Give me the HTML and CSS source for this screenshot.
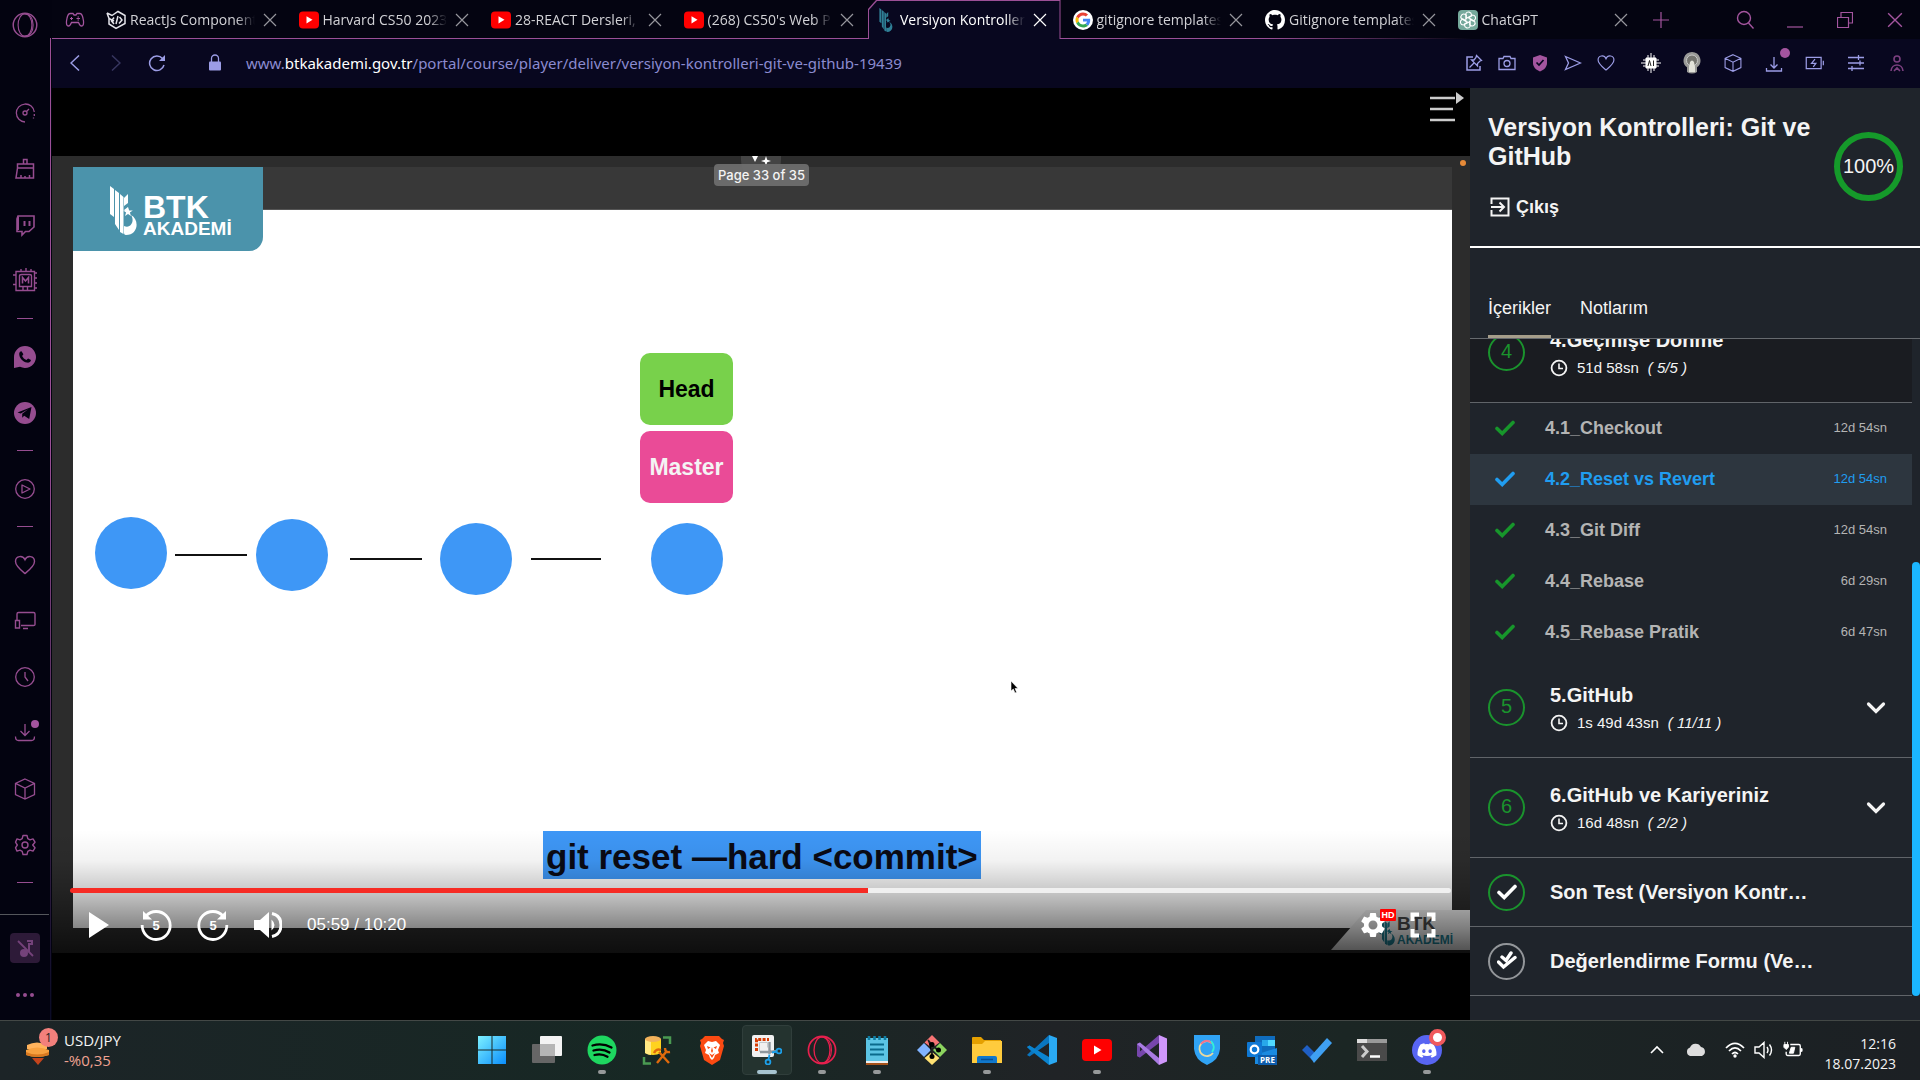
FILE: index.html
```html
<!DOCTYPE html>
<html lang="tr">
<head>
<meta charset="utf-8">
<title>Versiyon Kontrolleri: Git ve GitHub</title>
<link rel="stylesheet" href="styles.css">
</head>
<body>
<svg class="defs" aria-hidden="true">
  <defs>
    <symbol id="close" viewBox="0 0 14 14"><path d="M1 1l12 12M13 1L1 13" fill="none" stroke="currentColor" stroke-width="1.2"/></symbol>
    <symbol id="youtube" viewBox="0 0 20 18"><rect width="20" height="17" y=".5" rx="4" fill="#f00"/><path d="M7.5 5.2v7.2l6-3.6z" fill="#fff"/></symbol>
    <symbol id="check" viewBox="0 0 20 16"><path d="M2 8.500l5.200 5L18 2.500" fill="none" stroke="currentColor" stroke-width="3.600" stroke-linecap="round" stroke-linejoin="miter"/></symbol>
    <symbol id="clock" viewBox="0 0 18 18"><circle cx="9" cy="9" r="7.400" fill="none" stroke="currentColor" stroke-width="1.800"/><path d="M9 4.500V9.500h4" fill="none" stroke="currentColor" stroke-width="1.600"/></symbol>
    <symbol id="chevron" viewBox="0 0 20 14"><path d="M2.500 3l7.500 7.500L17.500 3" fill="none" stroke="currentColor" stroke-width="3.200" stroke-linecap="round"/></symbol>
    <symbol id="cube" viewBox="0 0 24 24"><path d="M12 2l9.500 4.300v11.200L12 22l-9.500-4.500V6.300zM2.500 6.300L12 11l9.500-4.700M12 11v11" fill="none" stroke="currentColor" stroke-width="1.300"/></symbol>
    <symbol id="heart" viewBox="0 0 24 24"><path d="M12 20.500C8 17.200 2.500 13 2.500 8.500c0-6 7.500-6.500 9.500-1.700 2-4.800 9.500-4.300 9.500 1.700 0 4.500-5.500 8.700-9.500 12z" fill="none" stroke="currentColor" stroke-width="1.400"/></symbol>
    <symbol id="opera" viewBox="0 0 32 32"><g fill="none" stroke="currentColor"><circle cx="16" cy="16" r="14.500" stroke-width="1.800"/><ellipse cx="16" cy="16" rx="8.500" ry="14" stroke-width="1.400"/><path d="M14 2c9 0 12 7 12 14s-3 14-12 14" stroke-width="1.400"/></g></symbol>
    <symbol id="btk" viewBox="0 0 27 49"><path d="M0 0l4 3v28l-4-3zM5 4l4 3v37l-4-6zM10 8l3.500 3v37l-3.500-2zM14 12l4-4v9l-4 3zM14 24l4-3v6z" fill="currentColor"/><path d="M18 21l1.200 3.400h3.600l-2.900 2.100 1.100 3.500-3-2.100-3 2.100 1.100-3.500-2.900-2.100h3.600z" fill="currentColor"/><path d="M21 29c9 5 7 20-5 20-3 0-2-5-2-9 7 3 11-5 7-11z" fill="currentColor"/></symbol>
    <symbol id="check2" viewBox="0 0 20 20"><path d="M1.500 11l5 5L18 6.500M5 6l4 3.500L14 2" fill="none" stroke="currentColor" stroke-width="3.400" stroke-linecap="round"/></symbol>
  </defs>
</svg>

<div class="browser">
  <nav class="rail" aria-label="Kenar çubuğu">
    <button class="rail-logo" aria-label="Opera"><svg width="26" height="26"><use href="#opera"/></svg></button>
    <button class="rail-btn" aria-label="GX Control"><svg width="24" height="24" viewBox="0 0 24 24"><g fill="none" stroke="currentColor" stroke-width="1.300"><path d="M12 21a9 9 0 1 1 9.300-10M21.300 13v2M20.500 16.500v1M13.500 10.500L16 8"/><circle cx="12" cy="12" r="2"/></g></svg></button>
    <button class="rail-btn" aria-label="GX Cleaner"><svg width="24" height="24" viewBox="0 0 24 24"><path d="M10.500 7V2.500h3.500V7M4.500 7h16v4h-16zM4.500 11L3 21h17.500V11M8 21v-3M12 21v-2M16.500 21v-3" fill="none" stroke="currentColor" stroke-width="1.500"/></svg></button>
    <button class="rail-btn" aria-label="Twitch"><svg width="24" height="24" viewBox="0 0 24 24"><path d="M5 3h16v11l-5 4.500h-3.500L9 22v-3.500H4V6z" fill="none" stroke="currentColor" stroke-width="1.600"/><path d="M4 5l2-2v14H4zM10.500 8h2v5h-2zM15.500 8h2v5h-2z" fill="currentColor"/></svg></button>
    <button class="rail-btn" aria-label="Mod"><svg width="26" height="26" viewBox="0 0 26 26"><path d="M4 3.500h18.500v19H4zM7.500 8q0-1.500 2-1.500h8q2 0 2 1.500v10.500H7.500zM9 3.500V1M14 3.500V0M19 3.500V1M22.500 5H25M22.500 10H25M22.500 15H25M22.500 20H25M4 7H1M4 16.500H1M11 18.500v4M15.500 18.500v4" fill="none" stroke="currentColor" stroke-width="1.400"/><path d="M10.500 15.500V9.500l3 3.500 3-3.500v6" fill="none" stroke="currentColor" stroke-width="1.600"/></svg></button>
    <hr class="rail-dash">
    <button class="rail-btn" aria-label="WhatsApp"><svg width="24" height="24" viewBox="0 0 24 24"><path d="M12 1a11 11 0 1 1-5 20.800L1 23V12A11 11 0 0 1 12 1z" fill="currentColor"/><path d="M8.500 6.200l1.900 3-1.300 1.700c1 2 2.300 3.200 4.300 4l1.700-1.500 2.900 1.600c-.4 2.300-2.200 2.900-4 2.600C9.500 16.700 6.400 13 6.200 9c0-1.500 1-2.800 2.300-2.800z" fill="#030311"/></svg></button>
    <button class="rail-btn" aria-label="Telegram"><svg width="24" height="24" viewBox="0 0 24 24"><circle cx="12" cy="12" r="11" fill="currentColor"/><path d="M4.500 11.500L18.500 6l-2.300 12-5-3.300-2 2v-4l6-4.500-7.500 4.300z" fill="#030311"/></svg></button>
    <hr class="rail-dash">
    <button class="rail-btn" aria-label="Oynatıcı"><svg width="24" height="24" viewBox="0 0 24 24"><g fill="none" stroke="currentColor" stroke-width="1.300"><circle cx="12" cy="12" r="9.300"/><path d="M9 8v8l8-4z" stroke-linejoin="round"/></g></svg></button>
    <hr class="rail-dash">
    <button class="rail-btn" aria-label="Favoriler"><svg width="24" height="24"><use href="#heart"/></svg></button>
    <button class="rail-btn" aria-label="Cihazlar"><svg width="24" height="24" viewBox="0 0 24 24"><path d="M4 11V5q0-1.500 1.500-1.500h15Q22 3.500 22 5v10.500q0 1-1.500 1H8M2.500 11.500h4v7.500h-4zM10 19.500h5" fill="none" stroke="currentColor" stroke-width="1.400"/></svg></button>
    <button class="rail-btn" aria-label="Geçmiş"><svg width="24" height="24" viewBox="0 0 24 24"><g fill="none" stroke="currentColor" stroke-width="1.300"><circle cx="12" cy="12" r="9.300"/><path d="M12 7v5l3 4"/></g></svg></button>
    <button class="rail-btn has-dot" aria-label="İndirilenler"><svg width="24" height="24" viewBox="0 0 24 24"><path d="M12 3v11M7.500 10l4.500 4.500 4.500-4.500M2.500 15.500q0 4 3 4h13q3 0 3-4" fill="none" stroke="currentColor" stroke-width="1.300"/></svg></button>
    <button class="rail-btn" aria-label="Uzantılar"><svg width="24" height="24"><use href="#cube"/></svg></button>
    <button class="rail-btn" aria-label="Ayarlar"><svg width="24" height="24" viewBox="0 0 24 24"><g fill="none" stroke="currentColor" stroke-width="1.400" stroke-linejoin="round"><circle cx="12" cy="12" r="3"/><path d="M10 2.500h4l.8 3.200 2.200 1.200 3-1 2 3.300-2.300 2.800 2.300 2.800-2 3.300-3-1-2.200 1.200-.8 3.200h-4l-.8-3.200L7 17.100l-3 1-1.500-3.300L4.300 12 2.500 9.200 4 5.900l3 1 2.200-1.200z"/></g></svg></button>
    <hr class="rail-dash">
    <div class="rail-foot">
      <button class="rail-mute" aria-label="Müziği kapat"><svg width="20" height="20" viewBox="0 0 20 20"><path d="M12 3h5v3h-3v8" fill="none" stroke="currentColor" stroke-width="2"/><circle cx="9" cy="15" r="4" fill="currentColor"/><path d="M3 3l15 15" stroke="currentColor" stroke-width="1.800"/></svg></button>
      <button class="rail-more" aria-label="Daha fazla"><svg width="20" height="6" viewBox="0 0 20 6"><g fill="currentColor"><circle cx="3" cy="3" r="2"/><circle cx="10" cy="3" r="2"/><circle cx="17" cy="3" r="2"/></g></svg></button>
    </div>
  </nav>

  <div class="window">
    <header class="tabstrip">
      <button class="gx" aria-label="GX Corner"><svg width="20" height="16" viewBox="0 0 20 16"><path d="M5 1.500h3l1 1.500h2l1-1.500h3q2.500 0 3.500 7.500.5 5-2 5-1.500 0-3-3.500h-7Q5 14 3.500 14 1 14 1.500 9 2.500 1.500 5 1.500z" fill="none" stroke="currentColor" stroke-width="1.300"/><path d="M5 6.500h3M6.500 5v3M12.500 5h1.500M12.500 8h1.500M11.500 6.500h3.500" stroke="currentColor"/></svg></button>
      <div class="tabs">
        <div class="tab"><svg width="20" height="20" viewBox="0 0 20 20"><g fill="none" stroke="#e4e4ea" stroke-width="1.500"><path d="M1 3l5 2.500L12 1.500l7 4v8l-9 5-7-4.500V8.500L1 3"/><path d="M3 8.500l5 2.500M8 7.500L5.500 11 8 14M12 6l-2 8M13.500 7l2.500 3-3 3.500"/></g></svg><a href="#">ReactJs Component</a><button aria-label="Kapat"><svg width="14" height="14"><use href="#close"/></svg></button></div>
        <div class="tab"><svg width="20" height="18"><use href="#youtube"/></svg><a href="#">Harvard CS50 2023 Web</a><button aria-label="Kapat"><svg width="14" height="14"><use href="#close"/></svg></button></div>
        <div class="tab"><svg width="20" height="18"><use href="#youtube"/></svg><a href="#">28-REACT Dersleri, 2</a><button aria-label="Kapat"><svg width="14" height="14"><use href="#close"/></svg></button></div>
        <div class="tab"><svg width="20" height="18"><use href="#youtube"/></svg><a href="#">(268) CS50's Web Prog</a><button aria-label="Kapat"><svg width="14" height="14"><use href="#close"/></svg></button></div>
        <div class="tab active"><svg class="mark" width="20" height="24"><use href="#btk"/></svg><a href="#">Versiyon Kontrolleri: Git</a><button aria-label="Kapat"><svg width="14" height="14"><use href="#close"/></svg></button></div>
        <div class="tab"><svg width="20" height="20" viewBox="0 0 64 64"><circle cx="32" cy="32" r="32" fill="#fff"/><g transform="translate(8 8)"><path fill="#EA4335" d="M24 9.500c3.540 0 6.710 1.220 9.210 3.600l6.850-6.850C35.900 2.380 30.470 0 24 0 14.620 0 6.510 5.380 2.560 13.220l7.980 6.190C12.430 13.720 17.740 9.500 24 9.500z"/><path fill="#4285F4" d="M46.980 24.550c0-1.570-.15-3.090-.38-4.550H24v9.020h12.940c-.58 2.960-2.260 5.480-4.780 7.180l7.730 6c4.510-4.180 7.090-10.360 7.090-17.650z"/><path fill="#FBBC05" d="M10.530 28.590c-.48-1.450-.76-2.990-.76-4.590s.27-3.140.76-4.590l-7.980-6.190C.92 16.460 0 20.120 0 24c0 3.880.92 7.540 2.560 10.780l7.970-6.190z"/><path fill="#34A853" d="M24 48c6.480 0 11.930-2.130 15.890-5.810l-7.730-6c-2.150 1.450-4.920 2.300-8.160 2.300-6.260 0-11.570-4.220-13.470-9.910l-7.980 6.190C6.510 42.620 14.620 48 24 48z"/></g></svg><a href="#">gitignore templates</a><button aria-label="Kapat"><svg width="14" height="14"><use href="#close"/></svg></button></div>
        <div class="tab"><svg width="20" height="20" viewBox="0 0 16 16"><path fill="#fff" d="M8 0C3.580 0 0 3.580 0 8c0 3.540 2.290 6.530 5.470 7.590.4.070.55-.17.55-.38 0-.19-.01-.82-.01-1.490-2.010.37-2.530-.49-2.690-.94-.09-.23-.48-.94-.82-1.130-.28-.15-.68-.52-.01-.53.63-.01 1.080.58 1.230.82.72 1.210 1.870.87 2.330.66.07-.52.28-.87.51-1.070-1.780-.2-3.640-.89-3.640-3.950 0-.87.31-1.590.82-2.150-.08-.2-.36-1.020.08-2.120 0 0 .67-.21 2.200.82.64-.18 1.320-.27 2-.27s1.360.09 2 .27c1.530-1.040 2.200-.82 2.200-.82.44 1.100.16 1.920.08 2.120.51.56.82 1.270.82 2.150 0 3.070-1.870 3.750-3.650 3.950.29.25.54.73.54 1.480 0 1.070-.01 1.930-.01 2.200 0 .21.15.46.55.38A8.010 8.010 0 0 0 16 8c0-4.420-3.580-8-8-8z"/></svg><a href="#">Gitignore templates</a><button aria-label="Kapat"><svg width="14" height="14"><use href="#close"/></svg></button></div>
        <div class="tab"><svg width="20" height="20" viewBox="0 0 20 20"><rect width="20" height="20" rx="4" fill="#75a99b"/><g fill="none" stroke="#fff" stroke-width="1.100"><path id="petal" d="M10 8.200L13.500 6V5a3 3 0 0 0-5.600-1.500L7.800 10"/><use href="#petal" transform="rotate(60 10 10)"/><use href="#petal" transform="rotate(120 10 10)"/><use href="#petal" transform="rotate(180 10 10)"/><use href="#petal" transform="rotate(240 10 10)"/><use href="#petal" transform="rotate(300 10 10)"/></g></svg><a href="#">ChatGPT</a><button aria-label="Kapat"><svg width="14" height="14"><use href="#close"/></svg></button></div>
      </div>
      <button class="new-tab" aria-label="Yeni sekme"><svg width="16" height="16" viewBox="0 0 16 16"><path d="M8 0v16M0 8h16" stroke="currentColor" stroke-width="1.200"/></svg></button>
      <div class="win-buttons">
        <button aria-label="Ara"><svg width="20" height="20" viewBox="0 0 20 20"><g fill="none" stroke="currentColor" stroke-width="1.400"><circle cx="9" cy="8" r="6.500"/><path d="M13.500 13l5 5.500"/></g></svg></button>
        <button aria-label="Küçült"><svg width="16" height="16" viewBox="0 0 16 16"><path d="M0 15h16" stroke="currentColor" stroke-width="1.200"/></svg></button>
        <button aria-label="Geri yükle"><svg width="16" height="16" viewBox="0 0 16 16"><path d="M.5 5.500h11v10H.5zM4 5V.5h11.500V11H12" fill="none" stroke="currentColor" stroke-width="1.200"/></svg></button>
        <button aria-label="Pencereyi kapat"><svg width="16" height="16" viewBox="0 0 14 14"><use href="#close"/></svg></button>
      </div>
    </header>

    <div class="toolbar">
      <div class="nav">
        <button aria-label="Geri"><svg width="10" height="16" viewBox="0 0 10 16"><path d="M9 .5L1 8l8 7.500" fill="none" stroke="currentColor" stroke-width="1.500"/></svg></button>
        <button aria-label="İleri" disabled><svg width="10" height="16" viewBox="0 0 10 16"><path d="M1 .5L9 8l-8 7.500" fill="none" stroke="currentColor" stroke-width="1.500"/></svg></button>
        <button aria-label="Yenile"><svg width="18" height="18" viewBox="0 0 18 18"><path d="M16 11A7.300 7.300 0 1 1 14.500 4.500" fill="none" stroke="currentColor" stroke-width="1.500"/><path d="M17 1v6h-6z" fill="currentColor"/></svg></button>
      </div>
      <svg class="lock" width="12" height="17" viewBox="0 0 12 17"><path d="M2.500 8V4.500a3.500 3.500 0 0 1 7 0V8" fill="none" stroke="currentColor" stroke-width="1.300"/><rect y="7.500" width="12" height="9" rx="1" fill="currentColor"/></svg>
      <p class="url">www.<b>btkakademi.gov.tr</b>/portal/course/player/deliver/versiyon-kontrolleri-git-ve-github-19439</p>
      <div class="page-actions">
        <button aria-label="Sabitle"><svg width="18" height="18" viewBox="0 0 18 18"><path d="M8 3H2v13h13v-4" fill="none" stroke="currentColor" stroke-width="1.500"/><path d="M11.500 1.500l5 5-1.500.5-2.500 2.500V12L6.500 6h2.500L11 3.500zM9 9l-4.500 4.500" fill="none" stroke="currentColor" stroke-width="1.300"/></svg></button>
        <button aria-label="Anlık görüntü"><svg width="18" height="18" viewBox="0 0 18 18"><path d="M1 4.500h4l1-2h6l1 2h4v11H1z" fill="none" stroke="currentColor" stroke-width="1.300"/><circle cx="9" cy="9.500" r="3" fill="none" stroke="currentColor" stroke-width="1.300"/></svg></button>
        <button class="pink" aria-label="Reklam engelleyici"><svg width="16" height="18" viewBox="0 0 16 18"><path d="M8 1l7 2.500V9c0 4-3 7-7 8.500C4 16 1 13 1 9V3.500z" fill="currentColor"/><path d="M4.500 8.500l2.500 2.500 4.500-5" fill="none" stroke="#08071f" stroke-width="1.700"/></svg></button>
        <button aria-label="Akışa gönder"><svg width="18" height="16" viewBox="0 0 18 16"><path d="M1.500 1.500L16.500 8l-15 6.500L4.500 8z" fill="none" stroke="currentColor" stroke-width="1.300"/></svg></button>
        <button aria-label="Favorilere ekle"><svg width="20" height="20"><use href="#heart"/></svg></button>
      </div>
      <div class="extensions">
        <button aria-label="AI"><svg width="20" height="20" viewBox="0 0 20 20"><path d="M5 5h10v10H5zM7 2v16M10 0v20M13 2v16M2 7h16M0 10h20M2 13h16" fill="#fff" stroke="#fff"/><path d="M7 13l1.500-5.500L10 13M12.500 7.500V13" fill="none" stroke="#222"/></svg></button>
        <button aria-label="Işık"><svg width="18" height="22" viewBox="0 0 18 22"><path d="M9 0a8.500 8.500 0 0 1 5 15.300V20q-5 3-10 0v-4.700A8.500 8.500 0 0 1 9 0z" fill="#9a9a98"/><circle cx="9" cy="8.500" r="5.500" fill="#74746f" stroke="#c8c8c8"/><path d="M7 10q2-3 4 0l1 5v5H6v-5z" fill="#e2e2da"/></svg></button>
        <button aria-label="Uzantılar"><svg width="20" height="20"><use href="#cube"/></svg></button>
        <button class="has-dot" aria-label="İndirilenler"><svg width="18" height="18" viewBox="0 0 18 18"><path d="M9 3v11M5.500 10.500L9 14l3.500-3.500M1.500 14v3h15v-3" fill="none" stroke="currentColor" stroke-width="1.300"/></svg></button>
        <button aria-label="Pil"><svg width="20" height="14" viewBox="0 0 22 16"><path d="M1 1.500h17v13H1zM20.500 5.500v5M11 3.500L7 8.500h5l-3 4" fill="none" stroke="currentColor" stroke-width="1.400"/></svg></button>
        <button aria-label="Kolay kurulum"><svg width="18" height="18" viewBox="0 0 18 18"><path d="M1 3.500h16M1 9h16M1 14.500h16M11.500 1v5M13 6.500v5M5 12v5" stroke="currentColor" stroke-width="1.300"/></svg></button>
        <button class="profile" aria-label="Profil"><svg width="16" height="18" viewBox="0 0 16 18"><g fill="none" stroke="currentColor" stroke-width="1.600"><circle cx="8" cy="5" r="3"/><path d="M2 17c.5-8 11.500-8 12 0M5 17l3-3 3 3"/></g></svg></button>
      </div>
    </div>

    <main class="page">
      <section class="player" aria-label="Video oynatıcı">
        <div class="player-top">
          <button class="menu-toggle" aria-label="Menüyü gizle"><svg width="36" height="26" viewBox="0 0 36 26"><path d="M1 4h25M1 15h23M1 26h25" stroke="#ccc" stroke-width="2.500"/><path d="M27-2v12l8-6z" fill="#ccc"/></svg></button>
        </div>
        <div class="frame">
          <span class="rec-dot"></span>
          <span class="sparkle"><svg width="40" height="24" viewBox="0 0 40 24"><path d="M11 0h6l-3 6zM25 0l1.200 3.800L30 5l-3.800 1.200L25 10l-1.200-3.800L20 5l3.800-1.200z" fill="#fff"/></svg></span>
          <span class="page-pill">Page 33 of 35</span>
          <div class="brand"><svg width="27" height="49"><use href="#btk"/></svg><p><b>BTK</b><span>AKADEMİ</span></p></div>
          <div class="pdf-bar"></div>
          <div class="slide">
            <span class="commit c1"></span><span class="edge e1"></span>
            <span class="commit c2"></span><span class="edge e2"></span>
            <span class="commit c3"></span><span class="edge e3"></span>
            <span class="commit c4"></span>
            <span class="ref head">Head</span>
            <span class="ref master">Master</span>
            <span class="command">git reset —hard &lt;commit&gt;</span>
            <svg class="cursor" width="9" height="14" viewBox="0 0 9 14"><path d="M1 1v10l2.300-2 1.700 4 1.600-.8L5 8.500h3z" fill="#000" stroke="#fff" stroke-width=".6"/></svg>
          </div>
          <div class="watermark"><svg width="16" height="32"><use href="#btk"/></svg><p><b>BTK</b><span>AKADEMİ</span></p></div>
          <div class="controls">
            <input class="seek" type="range" min="0" max="620" value="359" aria-label="Konum" style="--played:57.8%">
            <div class="control-row">
              <button aria-label="Oynat"><svg width="20" height="26" viewBox="0 0 20 26"><path d="M0 0v26l20-13z" fill="currentColor"/></svg></button>
              <button aria-label="5 saniye geri"><svg width="32" height="32" viewBox="0 0 32 32"><path d="M2.200 16A14 14 0 1 0 16 2.500Q10 2.500 6 7" fill="none" stroke="currentColor" stroke-width="2.800"/><path d="M3 2v8.500h9z" fill="currentColor"/><text x="16" y="21">5</text></svg></button>
              <button aria-label="5 saniye ileri"><svg width="32" height="32" viewBox="0 0 32 32"><path d="M29.800 16A14 14 0 1 1 16 2.500Q22 2.500 26 7" fill="none" stroke="currentColor" stroke-width="2.800"/><path d="M29 2v8.500h-9z" fill="currentColor"/><text x="16" y="21">5</text></svg></button>
              <button class="volume" aria-label="Ses"><svg width="28" height="28" viewBox="0 0 28 28"><path d="M0 9h6l9-8v26l-9-8H0zM17.500 8.500q6 5.500 0 11z" fill="currentColor"/><path d="M18 2.500q9 2 9 11.500t-9 11.500" fill="none" stroke="currentColor" stroke-width="3"/></svg></button>
              <span class="time">05:59 / 10:20</span>
              <button class="settings" aria-label="Ayarlar"><svg width="30" height="30" viewBox="0 0 24 24"><path fill="currentColor" d="M19.140 12.940c.04-.3.06-.61.06-.94 0-.32-.02-.64-.07-.94l2.030-1.580c.18-.14.23-.41.12-.61l-1.920-3.320c-.12-.22-.37-.29-.59-.22l-2.390.96c-.5-.38-1.030-.7-1.620-.94l-.36-2.540c-.04-.24-.24-.41-.48-.41h-3.840c-.24 0-.43.17-.47.41l-.36 2.540c-.59.24-1.130.57-1.620.94l-2.390-.96c-.22-.08-.47 0-.59.22L2.740 8.870c-.12.21-.08.47.12.61l2.030 1.580c-.05.3-.09.63-.09.94s.02.64.07.94l-2.030 1.580c-.18.14-.23.41-.12.61l1.920 3.320c.12.22.37.29.59.22l2.390-.96c.5.38 1.030.7 1.620.94l.36 2.540c.05.24.24.41.48.41h3.840c.24 0 .44-.17.47-.41l.36-2.540c.59-.24 1.130-.56 1.620-.94l2.390.96c.22.08.47 0 .59-.22l1.920-3.320c.12-.22.07-.47-.12-.61l-2.010-1.580zM12 15.600c-1.980 0-3.600-1.620-3.600-3.600s1.620-3.600 3.600-3.600 3.600 1.620 3.600 3.600-1.620 3.600-3.600 3.600z"/></svg><span class="hd">HD</span></button>
              <button aria-label="Tam ekran"><svg width="26" height="26" viewBox="0 0 26 26"><path d="M2.500 9V2.500H9M17 2.500h6.500V9M23.500 17v6.500H17M9 23.500H2.500V17" fill="none" stroke="currentColor" stroke-width="4"/></svg></button>
            </div>
          </div>
        </div>
      </section>

      <aside class="course">
        <header class="course-head">
          <div>
            <h1>Versiyon Kontrolleri: Git ve GitHub</h1>
            <a class="exit" href="#"><svg width="20" height="20" viewBox="0 0 20 20"><path d="M1.500 7V1.500h17v17h-17V13" fill="none" stroke="currentColor" stroke-width="2"/><path d="M1 10h12M9.500 5.500L14 10l-4.500 4.500" fill="none" stroke="currentColor" stroke-width="2"/></svg>Çıkış</a>
          </div>
          <span class="progress">100%</span>
        </header>
        <nav class="course-tabs"><a class="current" href="#">İçerikler</a><a href="#">Notlarım</a></nav>
        <div class="list-view">
          <div class="list">
            <button class="section open"><span class="ring">4</span><span class="info"><b>4.Geçmişe Dönme</b><span class="meta"><svg width="18" height="18"><use href="#clock"/></svg>51d 58sn <i>( 5/5 )</i></span></span></button>
            <ul>
              <li><a href="#"><svg width="20" height="16"><use href="#check"/></svg><b>4.1_Checkout</b><span>12d 54sn</span></a></li>
              <li><a class="playing" href="#"><svg width="20" height="16"><use href="#check"/></svg><b>4.2_Reset vs Revert</b><span>12d 54sn</span></a></li>
              <li><a href="#"><svg width="20" height="16"><use href="#check"/></svg><b>4.3_Git Diff</b><span>12d 54sn</span></a></li>
              <li><a href="#"><svg width="20" height="16"><use href="#check"/></svg><b>4.4_Rebase</b><span>6d 29sn</span></a></li>
              <li><a href="#"><svg width="20" height="16"><use href="#check"/></svg><b>4.5_Rebase Pratik</b><span>6d 47sn</span></a></li>
            </ul>
            <button class="section"><span class="ring">5</span><span class="info"><b>5.GitHub</b><span class="meta"><svg width="18" height="18"><use href="#clock"/></svg>1s 49d 43sn <i>( 11/11 )</i></span></span><svg class="chev" width="20" height="14"><use href="#chevron"/></svg></button>
            <button class="section"><span class="ring">6</span><span class="info"><b>6.GitHub ve Kariyeriniz</b><span class="meta"><svg width="18" height="18"><use href="#clock"/></svg>16d 48sn <i>( 2/2 )</i></span></span><svg class="chev" width="20" height="14"><use href="#chevron"/></svg></button>
            <a class="section single" href="#"><span class="ring"><svg width="20" height="16"><use href="#check"/></svg></span><b>Son Test (Versiyon Kontrolleri: Git ve GitHub)</b></a>
            <a class="section single todo" href="#"><span class="ring"><svg width="20" height="20"><use href="#check2"/></svg></span><b>Değerlendirme Formu (Versiyon Kontrolleri)</b></a>
          </div>
          <div class="scroll-track"><span class="scroll-thumb"></span></div>
        </div>
      </aside>
    </main>
  </div>
</div>

<footer class="taskbar">
  <button class="widget">
    <span class="widget-icon"><svg width="28" height="30" viewBox="0 0 28 30"><path d="M3 8q10-5 20 0v4H3z" fill="#ffb35c"/><path d="M2 13q11-5 23 0v5q-12 4-23 0z" fill="#f7a13f"/><path d="M2 15q11 5 23 0v3q-12 4-23 0z" fill="#d9781f"/><path d="M8 21l6 7 6-7z" fill="#c4441c"/></svg><em>1</em></span>
    <span class="widget-text">USD/JPY<span>-%0,35</span></span>
  </button>
  <div class="apps">
    <button aria-label="Başlat"><svg width="30" height="30" viewBox="0 0 30 30"><defs><linearGradient id="win" x1="0" y1="0" x2="1" y2="1"><stop offset="0" stop-color="#7df1ff"/><stop offset="1" stop-color="#0a8dfb"/></linearGradient></defs><path d="M1 1h13.500v13.500H1zM15.500 1H29v13.500H15.500zM1 15.500h13.500V29H1zM15.500 15.500H29V29H15.500z" fill="url(#win)"/></svg></button>
    <button aria-label="Görev görünümü"><svg width="30" height="30" viewBox="0 0 30 30"><rect x="8" y="1" width="22" height="20" rx="1" fill="#f3f3f3"/><rect y="9" width="23" height="19" rx="1" fill="#666"/><rect x="8" y="9" width="15" height="12" fill="#b5b5b5"/></svg></button>
    <button class="on" aria-label="Spotify"><svg width="30" height="30" viewBox="0 0 30 30"><circle cx="15" cy="15" r="14.500" fill="#1ed760"/><path d="M5.500 10.500q10-3 19 2M6.500 15.500q9-2.500 16 2M7.500 20q7-2 13 1.700" fill="none" stroke="#000" stroke-width="2.300" stroke-linecap="round"/></svg></button>
    <button aria-label="SQL"><svg width="30" height="30" viewBox="0 0 30 30"><path d="M3 4v14q8 4 16 0V4z" fill="#ffd21f"/><path d="M3 4v14q3 2 6 2V4z" fill="#ffe883"/><ellipse cx="11" cy="4" rx="8" ry="3" fill="#f2b25b"/><path d="M21 2.500h7V9M2 22v6.500h7" fill="none" stroke="#4a9a52" stroke-width="2.500"/><path d="M15 28l9-11M12 18q2-5 7-3M17 17l10 11M23 13q0 5 5 4" fill="none" stroke="#e06a0c" stroke-width="2.400"/></svg></button>
    <button aria-label="Brave"><svg width="30" height="30" viewBox="0 0 30 30"><path d="M8 1h14l3 3 2 1-1 3 1 3-4 14-8 5-8-5L3 11l1-3-1-3 2-1z" fill="#fb4a12"/><path d="M15 7l4-1 4 4-2 5 1 3-4 2-1 3-2 2-2-2-1-3-4-2 1-3-2-5 4-4z" fill="#fff"/><path d="M10 11l3.500 1.500L11 14zM20 11l-3.500 1.500L19 14zM15 12l1 4-1 2-1-2zM12 18l3 2 3-2-3 5z" fill="#fb4a12"/></svg></button>
    <button class="on focused" aria-label="Ekran Alıntısı"><svg width="30" height="30" viewBox="0 0 30 30"><rect width="22" height="22" rx="2" fill="#f1f1f1"/><path d="M4.500 16V4.500H17" fill="none" stroke="#d83b01" stroke-width="3" stroke-dasharray="3 1.400"/><path d="M7.500 7.500v9h7M7.500 7.500h8v5" fill="none" stroke="#c3c9cc" stroke-width="1"/><path d="M8 17h9l8-1M17.500 7v12" fill="none" stroke="#8f989e" stroke-width="2.400"/><circle cx="27" cy="16" r="2.400" fill="none" stroke="#1d9fe8" stroke-width="1.800"/><circle cx="16" cy="27" r="2.400" fill="none" stroke="#1d9fe8" stroke-width="1.800"/><path d="M16.500 24.500l1-5M20 17.500l5-1" fill="none" stroke="#1d9fe8" stroke-width="1.800"/></svg></button>
    <button class="on red" aria-label="Opera GX"><svg width="30" height="30"><use href="#opera" width="30" height="30"/></svg></button>
    <button class="on" aria-label="Not Defteri"><svg width="30" height="30" viewBox="0 0 30 30"><path d="M4 26h22v4H4z" fill="#a6521a"/><path d="M4 3h22v23H4z" fill="#5cc4e4"/><path d="M4 26h22v2H4z" fill="#eee"/><path d="M8 9.500h14M8 14.500h14M8 19.500h14" stroke="#0a6a8c" stroke-width="1.800"/><path d="M7 1v4M12.500 1v4M17.500 1v4M23 1v4" stroke="#0f7da3" stroke-width="2.600"/></svg></button>
    <button aria-label="Git"><svg width="30" height="30" viewBox="0 0 30 30"><path d="M15 0l7.500 7.500L15 13 7.500 7.500z" fill="#f77474"/><path d="M7 8l7 7-7 7-7-7z" fill="#80b3ff"/><path d="M23 8l7 7-7 7-7-7z" fill="#8cd45f"/><path d="M15 17l7.500 6L15 30l-7.500-7z" fill="#ffe172"/><path d="M11 5l4 5v11M15 9.500l6 6" stroke="#222" stroke-width="1.800"/><circle cx="15" cy="9.500" r="2.500"/><circle cx="15" cy="21.500" r="2.500"/><circle cx="21.500" cy="15" r="2.500"/></svg></button>
    <button class="on" aria-label="Dosya Gezgini"><svg width="30" height="30" viewBox="0 0 30 30"><path d="M0 3q0-1 1-1h8l3 3h17v6H0z" fill="#e5a000"/><path d="M0 9h10l3-3h17v22H0z" fill="#ffcb3d"/><path d="M5 28v-5q0-2 2-2h16q2 0 2 2v5z" fill="#1178cc"/><path d="M9 24.500h12" stroke="#074f94" stroke-width="1.500"/></svg></button>
    <button aria-label="Visual Studio Code"><svg width="30" height="30" viewBox="0 0 30 30"><path d="M22 0L7 14 2.500 10.500 0 12l4 4-4 4 2.500 1.500L22 8z" fill="#0a76c0"/><path d="M0 12l2.500-1.500L22 22v8L7 18z" fill="#0b84d0"/><path d="M22 0l8 3v24l-8 3z" fill="#2aa9f3"/></svg></button>
    <button class="on" aria-label="YouTube"><svg width="30" height="30" viewBox="0 0 30 30"><rect y="4" width="30" height="22" rx="4" fill="#f00"/><path d="M12 10.500v9l7.500-4.500z" fill="#fff"/></svg></button>
    <button aria-label="Visual Studio"><svg width="30" height="30" viewBox="0 0 30 30"><path d="M0 9l3-1.500v15L0 21z" fill="#7646ab"/><path d="M22 0v8L3 22.500 0 21v-2z" fill="#7646ab"/><path d="M0 9l3-1.500L22 23v7z" fill="#a97be2"/><path d="M22 0l8 3.500v23L22 30z" fill="#cf96fb"/></svg></button>
    <button aria-label="VPN"><svg width="30" height="30" viewBox="0 0 30 30"><path d="M2 0h26v14q-1 11-13 16Q3 25 2 14z" fill="#30a3f5"/><path d="M20 8a7.500 7.500 0 1 0 1 10" fill="none" stroke="#e8d9a0" stroke-width="1.800"/><path d="M9 9q5-6 11-1" fill="none" stroke="#f1728f" stroke-width="1.800"/><path d="M19 6q5 6 1 11" fill="none" stroke="#33f0d8" stroke-width="1.800"/></svg></button>
    <button aria-label="Outlook"><svg width="30" height="30" viewBox="0 0 30 30"><path d="M8 1h20v20H8z" fill="#0f6cbd"/><path d="M15 5h6v6h-6z" fill="#28a8ea"/><path d="M21 5h7v6h-7z" fill="#50d9ff"/><path d="M8 20l22-7v16H8z" fill="#1a8ae0"/><rect y="7" width="15" height="15" rx="1" fill="#0f78d4"/><circle cx="7.500" cy="14.500" r="3.800" fill="none" stroke="#fff" stroke-width="2.200"/><rect x="11" y="20" width="19" height="10" fill="#0d5cab"/><text class="pre" x="20.500" y="28">PRE</text></svg></button>
    <button aria-label="To Do"><svg width="30" height="30" viewBox="0 0 30 30"><path d="M0 15l5-5 8 8-3 7z" fill="#1f5fc4"/><path d="M8 22L25 3l5 5-18 20z" fill="#3fa0f2"/></svg></button>
    <button aria-label="Terminal"><svg width="30" height="30" viewBox="0 0 30 30"><path d="M0 4h30v22H0z" fill="#4a4a4a"/><path d="M0 4h30v4H0z" fill="#9a9a9a"/><path d="M0 4h10v4H0z" fill="#ddd"/><path d="M5 11l5 5.500L5 22" fill="none" stroke="#ccc" stroke-width="3"/><path d="M13 21.500h10" stroke="#fff" stroke-width="2.500"/></svg></button>
    <button class="on discord" aria-label="Discord"><svg width="30" height="30" viewBox="0 0 30 30"><circle cx="15" cy="15" r="15" fill="#5865f2"/><path transform="translate(5.500 6) scale(.79)" fill="#fff" d="M20.317 4.370a19.800 19.800 0 0 0-4.885-1.515l-.687 1.287a18.300 18.300 0 0 0-5.487 0l-.696-1.287a19.700 19.700 0 0 0-4.885 1.515C.533 9.046-.319 13.580.099 18.058c2.053 1.508 4.041 2.423 6.024 3.086l1.310-2.022-1.914-.998.457-.43c3.928 1.793 8.180 1.793 12.061 0l.451.430-1.880 1.020 1.309 2c1.961-.607 3.950-1.522 6.034-3.085.5-5.177-.838-9.674-3.634-13.689zM8.020 15.331c-1.183 0-2.157-1.086-2.157-2.419s.956-2.419 2.157-2.419c1.211 0 2.176 1.095 2.157 2.419 0 1.333-.956 2.419-2.157 2.419zm7.975 0c-1.183 0-2.157-1.086-2.157-2.419s.955-2.419 2.157-2.419c1.211 0 2.176 1.095 2.157 2.419 0 1.333-.946 2.419-2.157 2.419z"/></svg></button>
  </div>
  <div class="tray">
    <button aria-label="Gizli simgeler"><svg width="14" height="9" viewBox="0 0 14 9"><path d="M1 8l6-6 6 6" fill="none" stroke="#fff" stroke-width="1.600"/></svg></button>
    <button class="cloud" aria-label="OneDrive"><svg width="22" height="14" viewBox="0 0 22 14"><path d="M5 13a4.500 4.500 0 0 1 0-8.500 6 6 0 0 1 11-.5 4.700 4.700 0 0 1 1 9z" fill="#ddd"/></svg></button>
    <button class="status" aria-label="Ağ, ses, pil">
      <svg width="20" height="16" viewBox="0 0 20 16"><g fill="none" stroke="#fff" stroke-width="1.700"><path d="M1 6q9-9 18 0M4 9q6-6 12 0M7 12q3-3 6 0"/></g><circle cx="10" cy="14" r="1.700" fill="#fff"/></svg>
      <svg width="20" height="18" viewBox="0 0 20 18"><path d="M1 6h4l5-4.500v15L5 12H1zM13 6q2 3 0 6M15.500 3.500q4 5.500 0 11" fill="none" stroke="#fff" stroke-width="1.400"/></svg>
      <svg width="20" height="18" viewBox="0 0 22 18"><path d="M8 3h9.500q1.500 0 1.500 1.500v9q0 1.500-1.500 1.500H5q-1.500 0-1.500-1.500V11" fill="none" stroke="#fff" stroke-width="1.500"/><path d="M1 3h5v3L3.500 8.500 1 6zM2 0v3M5 0v3M7 12.500h4.500L13 6H9zM19.500 7.500h1.500v3h-1.500z" fill="#fff" stroke="#fff"/></svg>
    </button>
    <button class="clock">12:16<span>18.07.2023</span></button>
  </div>
</footer>
</body>
</html>
```

FILE: styles.css
```css
*, *::before, *::after { box-sizing: border-box; }
body {
  margin: 0;
  min-height: 100vh;
  display: flex;
  flex-direction: column;
  background: #000;
  color: #f4f4f4;
  font-family: "Liberation Sans", Arial, sans-serif;
}
button { margin: 0; padding: 0; border: 0; background: none; color: inherit; font: inherit; display: flex; align-items: center; justify-content: center; }
a { color: inherit; text-decoration: none; }
p, ul, h1 { margin: 0; padding: 0; }
svg { display: block; flex: none; }
.defs { position: absolute; width: 0; height: 0; }

.browser { flex: 1; display: flex; min-height: 0; }

/* Browser side rail */
.rail {
  width: 52px;
  padding-right: 3px;
  flex: none;
  display: flex;
  flex-direction: column;
  color: #964d90;
  background:
    linear-gradient(#9b4f96 0 40%, #4b2a55 70%, #0c0c26 95%) 50px 38px / 1px 100% no-repeat,
    #030310;
}
.rail-logo { height: 50px; margin-bottom: 35px; }
.rail-btn { height: 56px; position: relative; }
.rail-dash { width: 16px; height: 1px; margin: 9px auto 10px; border: 0; background: #964d90; }
.has-dot { position: relative; }
.has-dot::after {
  content: "";
  position: absolute;
  left: 31px;
  top: 15px;
  width: 8px;
  height: 8px;
  border-radius: 50%;
  background: #a4559f;
}
.rail-foot {
  margin-top: auto;
  height: 106px;
  padding-top: 18px;
  border-top: 1px solid #55575c;
  display: flex;
  flex-direction: column;
  align-items: center;
  gap: 29px;
}
.rail-mute { width: 30px; height: 30px; border-radius: 4px; background: #2d1a38; color: #74427a; }

/* Tabs */
.window { flex: 1; min-width: 0; display: flex; flex-direction: column; }
.tabstrip {
  height: 39px;
  display: flex;
  color: #a4559f;
  font: 14px/20px "Open Sans", "Noto Sans", sans-serif;
  background: linear-gradient(90deg, #9b4f96 0 65%, transparent 76%) 0 100% / 100% 1px no-repeat, #040411;
}
.gx { width: 46px; }
.tabs { flex: 1; min-width: 0; display: grid; grid-template-columns: repeat(8, minmax(0, 1fr)); }
.tab {
  display: flex;
  align-items: center;
  gap: 4px;
  padding: 0 14px 0 8px;
  color: #d2d2d6;
}
.tab.active ~ .tab { padding: 0 10px 0 12px; }
.tab a {
  flex: 1;
  white-space: nowrap;
  overflow: hidden;
  mask-image: linear-gradient(90deg, #000 85%, transparent);
}
.tab button { width: 14px; margin-left: 4px; color: #96969c; }
.tab.active {
  position: relative;
  z-index: 0;
  color: #fff;
  background: #9b4f96;
  clip-path: polygon(8px 0, 100% 0, 100% 100%, 0 100%, 0 9px);
}
.tab.active::before {
  content: "";
  position: absolute;
  z-index: -1;
  inset: 1px 1px 0;
  background: #08071f;
  clip-path: polygon(8px 0, 100% 0, 100% 100%, 0 100%, 0 9px);
}
.tab.active button { color: #fff; }
.mark { color: #2f7f96; }
.new-tab { width: 45px; margin-right: 37px; }
.win-buttons { display: flex; }
.win-buttons button { width: 50px; }

/* Address bar */
.toolbar { height: 49px; display: flex; align-items: center; padding-bottom: 2px; color: #9c9de6; background: #08071f; }
.nav { display: flex; padding-left: 2px; }
.nav button { width: 41px; height: 32px; }
.nav button:disabled { color: #37365f; }
.lock { margin: 0 25px 0 32px; }
.url { flex: 1; font: 15px/22px "Noto Sans", sans-serif; color: #8b8bd0; white-space: nowrap; }
.url b { color: #fff; font-weight: 400; }
.page-actions { display: flex; margin-right: 8px; }
.page-actions button { width: 33px; height: 32px; }
.pink { color: #a4559f; }
.extensions { display: flex; padding-right: 3px; }
.extensions button { width: 41px; height: 32px; }
.extensions .has-dot::after { left: 27px; top: 1px; width: 10px; height: 10px; }
.profile { color: #7c4080; }

/* Video player */
.page { flex: 1; display: flex; min-height: 0; }
.player { flex: 1; min-width: 0; display: flex; flex-direction: column; padding-bottom: 67px; background: #000; }
.player-top { height: 68px; display: flex; justify-content: flex-end; align-items: flex-start; padding: 6px 5px; }
.menu-toggle svg { overflow: visible; }
.frame {
  flex: 1;
  position: relative;
  display: flex;
  flex-direction: column;
  padding: 11px 18px 25px 21px;
  background: #2c2c2c;
  overflow: hidden;
}
.rec-dot { position: absolute; right: 4px; top: 4px; width: 6px; height: 6px; border-radius: 50%; background: #e88b38; }
.sparkle { position: absolute; left: 689px; top: 0; border-radius: 0 0 20px 20px; background: #444; z-index: 1; }
.page-pill {
  position: absolute;
  z-index: 2;
  left: 662px;
  top: 8px;
  padding: 0 4px;
  border-radius: 4px;
  background: rgba(112, 112, 112, .9);
  font: 500 13px/22px "Liberation Sans", sans-serif;
  font-family: Inter, sans-serif;
}
.brand {
  position: absolute;
  z-index: 1;
  left: 21px;
  top: 11px;
  width: 190px;
  height: 84px;
  display: flex;
  gap: 6px;
  padding: 19px 0 0 37px;
  border-radius: 0 0 14px 0;
  background: #4b93ab;
  color: #fff;
}
.brand p, .watermark p { display: flex; flex-direction: column; }
.brand b { font-size: 32px; line-height: 28px; padding-top: 7px; }
.brand span { font-size: 19px; line-height: 16px; font-weight: 700; }
.pdf-bar { height: 43px; flex: none; background: #383838; border-bottom: 1px solid #555; }
.slide { flex: 1; position: relative; background: #fff; overflow: hidden; }
.slide > * { position: absolute; }
.commit { width: 72px; height: 72px; border-radius: 50%; background: #3e97f6; }
.c1 { left: 22px; top: 307px; }
.c2 { left: 183px; top: 309px; }
.c3 { left: 367px; top: 313px; }
.c4 { left: 578px; top: 313px; }
.edge { width: 72px; height: 2px; background: #111; }
.e1 { left: 102px; top: 344px; }
.e2 { left: 277px; top: 348px; }
.e3 { left: 458px; top: 348px; width: 70px; }
.ref { left: 567px; width: 93px; height: 72px; border-radius: 10px; font-size: 23px; line-height: 73px; font-weight: 700; text-align: center; }
.head { top: 143px; background: #78d14b; color: #000; }
.master { top: 221px; background: #ea4b97; }
.command { left: 470px; top: 621px; padding: 3px 3px 0; background: #3e97f6; color: #0a0a14; font-size: 35px; line-height: 45px; font-weight: 700; white-space: nowrap; }
.cursor { left: 937px; top: 470px; }
.watermark {
  position: absolute;
  right: 0;
  bottom: 3px;
  width: 139px;
  height: 40px;
  display: flex;
  gap: 2px;
  padding: 5px 0 0 48px;
  background: #f2f2f2;
  clip-path: polygon(35px 0, 100% 0, 100% 100%, 0 100%);
  color: #1f8296;
}
.watermark b { font-size: 19px; line-height: 18px; color: #4a4a4a; }
.watermark span { font-size: 12px; line-height: 14px; font-weight: 700; }
.controls {
  position: absolute;
  left: 0;
  right: 0;
  bottom: 0;
  height: 123px;
  padding: 58px 19px 0 18px;
  display: flex;
  flex-direction: column;
  background: linear-gradient(transparent 0, rgba(0, 0, 0, .05) 25%, rgba(0, 0, 0, .22) 50%, rgba(0, 0, 0, .47) 79%, rgba(0, 0, 0, .68));
  color: #fff;
}
.seek {
  appearance: none;
  width: 100%;
  height: 5px;
  margin: 0;
  flex: none;
  border-radius: 3px;
  background: linear-gradient(90deg, #f62b24 var(--played), #f0f0f0 var(--played));
}
.seek::-webkit-slider-thumb { appearance: none; width: 1px; height: 1px; }
.control-row { display: flex; align-items: center; gap: 25px; height: 64px; flex: none; padding: 0 12px 0 13px; }
.control-row button { width: 32px; height: 32px; }
.control-row .volume { width: 28px; }
.control-row text { font-size: 13px; font-weight: 700; fill: #fff; text-anchor: middle; }
.time { flex: 1; font-size: 17px; line-height: 20px; }
.settings { position: relative; margin-right: -7px; }
.hd { position: absolute; left: 23px; top: 0; width: 16px; background: #f00; border-radius: 1px; font-size: 9px; line-height: 12px; font-weight: 700; text-align: center; }

/* Course panel */
.course { width: 450px; flex: none; display: flex; flex-direction: column; background: #1f242b; }
.course-head { height: 160px; flex: none; display: flex; justify-content: space-between; padding: 25px 17px 0 18px; border-bottom: 2px solid #fff; }
.course-head > div { width: 340px; }
.course h1 { font-size: 25px; line-height: 29px; }
.exit { display: flex; align-items: center; gap: 6px; margin: 25px 0 0 2px; font-size: 18px; line-height: 22px; font-weight: 700; }
.progress { width: 69px; height: 69px; margin-top: 19px; border: 6px solid #159a2a; border-radius: 50%; font-size: 20px; line-height: 56px; display: flex; justify-content: center; }
.course-tabs { height: 91px; flex: none; display: flex; align-items: flex-end; gap: 29px; padding: 0 18px; border-bottom: 1px solid #666a6f; font-size: 18px; line-height: 24px; }
.course-tabs a { padding-bottom: 15px; border-bottom: 3px solid transparent; }
.course-tabs .current { border-color: #a59d8a; }
.list-view { flex: 1; min-height: 0; display: flex; overflow: hidden; }
.list { flex: 1; min-width: 0; margin-top: -36px; }
.section {
  width: 100%;
  height: 100px;
  display: flex;
  align-items: center;
  justify-content: flex-start;
  gap: 25px;
  padding: 0 26px 0 18px;
  border-bottom: 1px solid #606469;
  text-align: left;
  font-size: 20px;
}
.section.open { background: #1a1c21; }
.section.single { height: 69px; padding-right: 96px; }
.section.single b { white-space: nowrap; overflow: hidden; text-overflow: ellipsis; line-height: 28px; }
.ring { width: 37px; height: 37px; flex: none; display: flex; align-items: center; justify-content: center; border: 2px solid #1a932d; border-radius: 50%; color: #1a932d; line-height: 29px; padding-bottom: 3px; }
.single .ring { color: #fff; padding: 0; }
.todo .ring { border-color: #93969a; }
.info { flex: 1; padding-top: 2px; display: flex; flex-direction: column; }
.info b { line-height: 28px; }
.meta { display: flex; align-items: center; font-size: 15px; line-height: 28px; }
.meta svg { margin-right: 9px; }
.meta i { margin-left: 9px; }
.list ul { list-style: none; }
.list li a { height: 51px; display: flex; align-items: center; gap: 30px; padding: 0 25px 2px; color: #b4b4b4; font-size: 18px; line-height: 24px; }
.list li svg { color: #17962b; }
.list li b { flex: 1; }
.list li span { font-size: 13px; }
.list li .playing { background: #2d363f; color: #209df0; }
.list li .playing svg { color: #209df0; }
.scroll-track { width: 8px; padding-top: 223px; }
.scroll-thumb { display: block; height: 434px; border-radius: 4px; background: #1bb6ff; }

/* Windows taskbar */
.taskbar {
  height: 60px;
  flex: none;
  display: grid;
  grid-template-columns: 1fr auto 1fr;
  padding: 0 2px 2px 0;
  border-top: 1px solid #434846;
  background: linear-gradient(90deg, #1c2427, #172824 35%, #202326 55%, #1b2624 70%, #1c2024);
  font: 14px/20px "Open Sans", "Noto Sans", sans-serif;
}
.widget { justify-self: start; gap: 12px; padding-left: 24px; text-align: left; }
.widget-icon { position: relative; padding-top: 4px; }
.widget-icon em { position: absolute; left: 15px; top: -5px; width: 19px; height: 19px; border-radius: 50%; background: #f2807c; color: #222; font-size: 12px; line-height: 19px; font-style: normal; text-align: center; }
.widget-text { font-size: 15px; }
.widget-text span { display: block; color: #f0a392; }
.clock span { display: block; }
.apps { display: flex; gap: 5px; align-items: center; }
.apps button { width: 50px; height: 50px; position: relative; border-radius: 4px; border: 1px solid transparent; }
.apps .on::after { content: ""; position: absolute; left: 20px; bottom: 0; width: 8px; height: 4px; border-radius: 2px; background: #96999a; }
.apps .focused { background: #24332f; border-color: #303e3b; }
.apps .focused::after { left: 14px; width: 20px; background: #a7c4d0; }
.red { color: #e8204e; }
.discord::before { content: ""; position: absolute; right: 5px; top: 3px; width: 17px; height: 17px; border: 4px solid #f0595c; border-radius: 50%; background: #fff; }
.pre { font: 700 8px "Open Sans", sans-serif; fill: #fff; text-anchor: middle; }
.tray { justify-self: end; display: flex; align-items: stretch; padding-right: 22px; }
.tray > button:first-child { width: 32px; }
.cloud { width: 46px; }
.status { gap: 9px; padding: 0 6px; }
.tray .clock { display: block; padding: 8px 0 0 16px; text-align: right; }
```
